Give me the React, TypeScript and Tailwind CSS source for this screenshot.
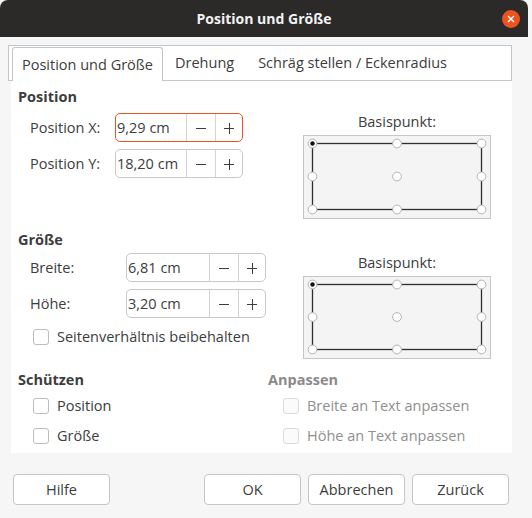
import React from "react";

interface SpinBoxProps {
  value: string;
  textClass: string;
  focused?: boolean;
}

function SpinBox({ value, textClass, focused = false }: SpinBoxProps) {
  return (
    <div
      className={`flex h-[29px] rounded-[5px] border bg-white ${
        focused ? "border-[#e95420]" : "border-[#c8c8c8]"
      }`}
    >
      <div className={`flex items-center pl-px ${textClass}`}>{value}</div>
      <div className="flex w-[29px] items-center justify-center border-l border-[#d4d4d4]">
        <svg width="12" height="12" viewBox="0 0 12 12">
          <path d="M1 6.5h10" stroke="#3d3d3d" strokeWidth="1" />
        </svg>
      </div>
      <div className="flex w-[27px] items-center justify-center border-l border-[#d4d4d4]">
        <svg width="12" height="12" viewBox="0 0 12 12">
          <path d="M1 6.5h10M6.5 1v11" stroke="#3d3d3d" strokeWidth="1" />
        </svg>
      </div>
    </div>
  );
}

function Check({ label, disabled = false }: { label: string; disabled?: boolean }) {
  return (
    <div className="flex h-5 items-center pl-[15px]">
      <span
        className={`h-4 w-4 rounded-[3px] border ${
          disabled ? "border-[#dcdcdc] bg-[#fbfbfb]" : "border-[#bdbdbd] bg-white"
        }`}
      />
      <span className={`ml-2 ${disabled ? "text-[#8f8f8f]" : ""}`}>{label}</span>
    </div>
  );
}

// Basispunkt picker: rectangle outline with 9 radio points
function BasePoint({ boxClass, bottom }: { boxClass: string; bottom: number }) {
  const xs = [8.5, 93, 177.5];
  const ys = [7.5, (7.5 + bottom) / 2, bottom];
  return (
    <div className="flex flex-col items-center">
      <div className="h-5 leading-5">Basispunkt:</div>
      <div className={`mt-[3px] w-[188px] border border-[#c6c6c6] bg-[#f4f4f5] ${boxClass}`}>
        <svg width="186" height="100%" className="block h-full">
          <rect
            x={xs[0]}
            y={ys[0]}
            width={xs[2] - xs[0]}
            height={bottom - ys[0]}
            fill="none"
            stroke="#2e2e2e"
            strokeWidth="1.3"
          />
          {ys.map((y, i) =>
            xs.map((x, j) => (
              <g key={`${i}-${j}`}>
                <circle cx={x} cy={y} r="4.4" fill="#ffffff" stroke="#b3b3b3" strokeWidth="1" />
                {i === 0 && j === 0 && <circle cx={x} cy={y} r="2.2" fill="#111111" />}
              </g>
            ))
          )}
        </svg>
      </div>
    </div>
  );
}

function Btn({ children }: { children: React.ReactNode }) {
  return (
    <button
      type="button"
      className="flex h-[31px] w-[97px] items-center justify-center rounded-[4px] border border-[#c6c6c6] bg-white"
    >
      {children}
    </button>
  );
}

export default function App() {
  return (
    <div className="flex h-[518px] w-[532px] flex-col overflow-hidden bg-[#f6f6f7] font-['Open_Sans',sans-serif] text-[14.5px] text-[#3d3d3d]">
      {/* title bar */}
      <div className="relative mr-[4px] flex h-[37px] shrink-0 items-center justify-center rounded-t-[8px] bg-[#2c2a29]">
        <span className="text-[14px] font-bold text-[#f2f2f2]">Position und Größe</span>
        <button
          type="button"
          className="absolute right-[8px] top-[10px] flex h-[18px] w-[18px] items-center justify-center rounded-full bg-[#e95420]"
        >
          <svg width="8" height="8" viewBox="0 0 8 8">
            <path d="M1 1l6 6M7 1L1 7" stroke="#ffffff" strokeWidth="1.4" />
          </svg>
        </button>
      </div>

      <div className="flex flex-col px-2 pt-2">
        {/* tabs */}
        <div className="flex h-[36px] w-[504px] items-end border border-[#c3c6c9] bg-white pl-[3px]">
          <div className="-mb-px flex h-[34px] items-center rounded-t-[3px] border border-b-0 border-[#c3c6c9] bg-white px-[9px]">
            Position und Größe
          </div>
          <div className="flex h-[34px] items-center px-3">Drehung</div>
          <div className="flex h-[34px] items-center px-3">Schräg stellen / Eckenradius</div>
        </div>

        {/* page */}
        <div className="ml-[3px] flex h-[372px] w-[501px] flex-col bg-white pl-[7px] pt-[6px]">
          {/* Position */}
          <div className="flex">
            <div className="flex w-[285px] flex-col">
              <div className="h-5 font-bold leading-5">Position</div>
              <div className="mt-[6px] flex flex-col gap-[7px]">
                <div className="flex items-center">
                  <span className="w-[97px] pl-3">Position X:</span>
                  <SpinBox value="9,29 cm" textClass="w-[70px]" focused />
                </div>
                <div className="flex items-center">
                  <span className="w-[97px] pl-3">Position Y:</span>
                  <SpinBox value="18,20 cm" textClass="w-[70px]" />
                </div>
              </div>
            </div>
            <div className="mt-[25px]">
              <BasePoint boxClass="h-[84px]" bottom={73.5} />
            </div>
          </div>

          {/* Größe */}
          <div className="mt-[11px] flex">
            <div className="flex w-[285px] flex-col">
              <div className="h-5 font-bold leading-5">Größe</div>
              <div className="mt-[3px] flex flex-col gap-[7px]">
                <div className="flex items-center">
                  <span className="w-[108px] pl-3">Breite:</span>
                  <SpinBox value="6,81 cm" textClass="w-[82px]" />
                </div>
                <div className="flex items-center">
                  <span className="w-[108px] pl-3">Höhe:</span>
                  <SpinBox value="3,20 cm" textClass="w-[82px]" />
                </div>
              </div>
              <div className="mt-[9px]">
                <Check label="Seitenverhältnis beibehalten" />
              </div>
            </div>
            <div className="mt-[23px]">
              <BasePoint boxClass="h-[83px]" bottom={72.5} />
            </div>
          </div>

          {/* Schützen / Anpassen */}
          <div className="mt-[11px] flex">
            <div className="flex w-[250px] flex-col">
              <div className="h-5 font-bold leading-5">Schützen</div>
              <div className="mt-[6px] flex flex-col gap-[10px]">
                <Check label="Position" />
                <Check label="Größe" />
              </div>
            </div>
            <div className="flex flex-col">
              <div className="h-5 font-bold leading-5 text-[#8a8a8a]">Anpassen</div>
              <div className="mt-[6px] flex flex-col gap-[10px]">
                <Check label="Breite an Text anpassen" disabled />
                <Check label="Höhe an Text anpassen" disabled />
              </div>
            </div>
          </div>
        </div>

        {/* buttons */}
        <div className="mt-[21px] flex w-[504px] pl-[5px] pr-[3px]">
          <Btn>Hilfe</Btn>
          <div className="ml-auto flex gap-[7px]">
            <Btn>OK</Btn>
            <Btn>Abbrechen</Btn>
            <Btn>Zurück</Btn>
          </div>
        </div>
      </div>
    </div>
  );
}
